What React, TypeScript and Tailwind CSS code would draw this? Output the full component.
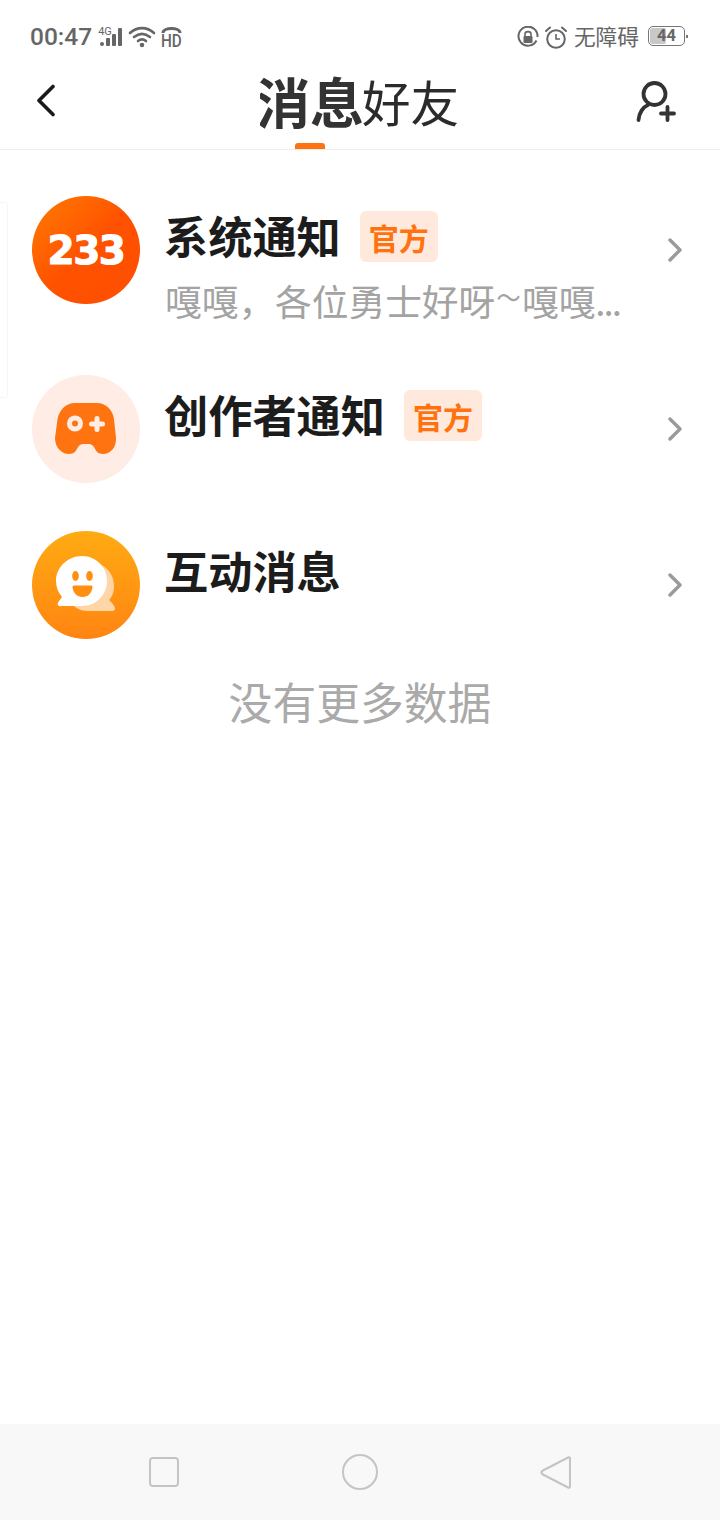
import React from "react";

const cjk = { fontFamily: '"Noto Sans CJK SC", "Noto Sans", sans-serif' };

function Chevron() {
  return (
    <svg width="14" height="24" viewBox="0 0 14 24" fill="none" className="ml-auto">
      <path d="M2 2 L12 12 L2 22" stroke="#9a9a9a" strokeWidth="3.4" strokeLinecap="round" strokeLinejoin="round" />
    </svg>
  );
}

function Badge() {
  return (
    <span className="ml-[19px] mt-[4px] flex h-[51px] w-[78px] items-center justify-center rounded-[6px] bg-[#ffe9dd] text-[30px] font-bold leading-none text-[#ff7210]">
      官方
    </span>
  );
}

function Row({ avatar, title, badge, sub, className }: { avatar: React.ReactNode; title: string; badge?: boolean; sub?: React.ReactNode; className: string }) {
  return (
    <div className={"flex items-start pl-[32px] pr-[38px] " + className}>
      <div className="h-[108px] w-[108px] shrink-0">{avatar}</div>
      <div className="ml-[25px] w-[470px] shrink-0 pt-[11px]">
        <div className="ml-[-1px] flex items-start">
          <span className="text-[44.2px] font-bold leading-[56px] text-[#1c1c1c]">{title}</span>
          {badge && <Badge />}
        </div>
        {sub && <div className="mt-[6px] h-[50px] w-[470px] whitespace-nowrap text-[36.7px] leading-[50px] text-[#a3a3a3]">{sub}</div>}
      </div>
      <div className="flex h-[108px] flex-1 items-center">
        <Chevron />
      </div>
    </div>
  );
}

function Logo233() {
  return (
    <div className="flex h-[108px] w-[108px] items-center justify-center overflow-hidden rounded-full bg-gradient-to-br from-[#ff7a00] via-[#ff5200] to-[#ff4d00]">
      <span className="text-[39px] font-bold leading-none tracking-[-1.5px] text-white [-webkit-text-stroke:1px_white]" style={{ fontFamily: '"DejaVu Sans", sans-serif' }}>
        233
      </span>
    </div>
  );
}

function GameAvatar() {
  return (
    <div className="flex h-[108px] w-[108px] items-center justify-center rounded-full bg-[#ffece5]">
      <svg width="62" height="52" viewBox="0 0 62 52" className="ml-[-1px]">
        <path
          d="M20 0 H42 C52 0 58 8 59 16 L61 35 C61.5 45 55 51 48 51 C43 51 41 48 39.5 45 C38 42 36 41 34 41 H28 C26 41 24 42 22.5 45 C21 48 19 51 14 51 C7 51 0 45 0 35 L2.5 16 C4 8 10 0 20 0 Z"
          fill="#ff7411"
        />
        <circle cx="20" cy="20.5" r="5.5" fill="none" stroke="#ffece5" strokeWidth="5" />
        <path d="M36.5 21 H47.5 M42 15.5 V26.5" stroke="#ffece5" strokeWidth="5" strokeLinecap="round" />
      </svg>
    </div>
  );
}

function ChatAvatar() {
  return (
    <div className="flex h-[108px] w-[108px] items-center justify-center rounded-full bg-gradient-to-b from-[#ffab12] to-[#ff8412]">
      <svg width="60" height="58" viewBox="0 0 60 58">
        <path d="M33 6 C47 6 58 16 58 30 C58 36 56 41 53 44 C56 47 58 49 59 52 C59.5 54 58 55 56 55 H32 C18 55 10 44 10 30 C10 16 20 6 33 6 Z" fill="#ffd6a8" />
        <path d="M26 0 C40 0 51 11 51 25 C51 39 40 50 26 50 H5 C2 51 1 48 2 46.5 L6 41 C2 36 0 31 0 25 C0 11 12 0 26 0 Z" fill="#ffffff" />
        <ellipse cx="19.5" cy="20" rx="3.3" ry="5" fill="#ff8f10" />
        <ellipse cx="33.5" cy="20" rx="3.3" ry="5" fill="#ff8f10" />
        <path d="M18 29.5 H35 C36 29.5 36.5 30 36.5 31 C36 37 32 41 26.5 41 C21 41 17 37 16.5 31 C16.5 30 17 29.5 18 29.5 Z" fill="#ff8f10" />
      </svg>
    </div>
  );
}

function StatusBar() {
  return (
    <div className="flex h-[72px] items-start justify-between pl-[30px] pr-[32px] pt-[22px] text-[#666666]">
      <div className="flex items-start">
        <span className="text-[24.5px] font-medium leading-[30px]" style={{ fontFamily: "Roboto, sans-serif" }}>00:47</span>
        <div className="relative ml-[6px] mt-[5px] h-[20px] w-[25px]">
          <span className="absolute left-0 top-0 text-[11px] leading-[10px]" style={{ fontFamily: "Roboto, sans-serif" }}>4G</span>
          <svg width="25" height="20" viewBox="0 0 25 20" className="absolute left-0 top-0">
            <rect x="2" y="15" width="4" height="4" rx="2" fill="#666" />
            <rect x="8" y="11" width="4" height="8" rx="1" fill="#666" />
            <rect x="14" y="7" width="4" height="12" rx="1" fill="#666" />
            <rect x="20" y="1" width="4" height="18" rx="1" fill="#666" />
          </svg>
        </div>
        <svg width="28" height="22" viewBox="0 0 28 22" className="ml-[5px] mt-[4px]" fill="none" stroke="#666" strokeWidth="2.6" strokeLinecap="round">
          <path d="M2 7 C9 0.5 19 0.5 26 7" />
          <path d="M6 11 C11 7 17 7 22 11" />
          <path d="M10 15 C12.5 13 15.5 13 18 15" />
          <circle cx="14" cy="19" r="1" fill="#666" />
        </svg>
        <div className="relative ml-[5px] mt-[3px] h-[24px] w-[21px]">
          <svg width="21" height="10" viewBox="0 0 21 10" className="absolute left-0 top-0" fill="none" stroke="#666" strokeWidth="3">
            <path d="M2 8 C2 2 19 2 19 8" />
          </svg>
          <span className="absolute left-0 top-[7px] origin-left scale-x-[0.85] text-[18px] font-medium leading-[18px]" style={{ fontFamily: "Roboto, sans-serif" }}>HD</span>
        </div>
      </div>
      <div className="flex items-start">
        <svg width="22" height="22" viewBox="0 0 22 22" fill="none" className="mt-[4px]">
          <path d="M19.5 14.5 A9.5 9.5 0 1 1 20.5 11" stroke="#666" strokeWidth="2" />
          <rect x="6.5" y="10" width="9" height="7" rx="1" fill="#666" />
          <path d="M8 10 V8 C8 4.8 14 4.8 14 8 V10" stroke="#666" strokeWidth="1.6" />
        </svg>
        <svg width="22" height="23" viewBox="0 0 22 23" className="ml-[6px] mt-[4px]" fill="none" stroke="#666" strokeWidth="2">
          <circle cx="11" cy="13" r="8.8" />
          <path d="M11 8 V13 H15" strokeWidth="1.6" />
          <path d="M1 5 L5 1.5 M21 5 L17 1.5" strokeLinecap="round" />
        </svg>
        <span className="ml-[7px] mt-[-1px] text-[21.7px] leading-[30px]" style={cjk}>无障碍</span>
        <div className="relative ml-[9px] mt-[4px] flex items-center">
          <div className="relative h-[20px] w-[37px] overflow-hidden rounded-[5px] border border-[#777]">
            <div className="absolute left-[1px] top-[1px] h-[16px] w-[16px] rounded-[2px] bg-[#c8c8c8]" />
            <span className="absolute inset-0 text-center text-[16.5px] font-bold leading-[18px] text-[#666]" style={{ fontFamily: "Roboto, sans-serif" }}>44</span>
          </div>
          <div className="ml-[1px] h-[3px] w-[2px] bg-[#777]" />
        </div>
      </div>
    </div>
  );
}

function Header() {
  return (
    <div className="relative flex h-[78px] items-start justify-between border-b border-[#ececec] pl-[36px] pr-[44px]">
      <svg width="20" height="33" viewBox="0 0 20 33" fill="none" className="mt-[12px]">
        <path d="M17 2.5 L3 16.5 L17 30.5" stroke="#1a1a1a" strokeWidth="3.6" strokeLinecap="round" strokeLinejoin="round" />
      </svg>
      <div className="absolute left-[260px] top-0 flex items-start">
        <span className="h-[58px] w-[102px] overflow-hidden whitespace-nowrap text-[54px] font-bold leading-[58px] text-[#333333]">
          <span className="ml-[-4px] inline-block">消息</span>
        </span>
        <span className="mt-[-2px] whitespace-nowrap text-[48.5px] leading-[62px] text-[#2b2b2b]">好友</span>
      </div>
      <div className="absolute bottom-0 left-[295px] h-[6px] w-[30px] rounded-t-[3px] bg-[#ff7210]" />
      <svg width="40" height="44" viewBox="0 0 40 44" fill="none" className="mt-[8px]" stroke="#333" strokeLinecap="round">
        <circle cx="18.5" cy="14" r="11" strokeWidth="3.8" />
        <path d="M2.5 40 C3 33 7 27 12 25" strokeWidth="3.8" />
        <path d="M25 33.5 H38 M31.5 27 V40" strokeWidth="3.8" />
      </svg>
    </div>
  );
}

function NavBar() {
  return (
    <div className="flex h-[96px] shrink-0 items-center justify-center bg-[#f8f8f8]">
      <div className="flex w-[193px] justify-start">
        <div className="h-[30px] w-[30px] rounded-[4px] border-[2px] border-[#c4c4c4]" />
      </div>
      <div className="h-[36px] w-[36px] rounded-full border-[2px] border-[#c4c4c4]" />
      <div className="flex w-[193px] justify-end">
        <svg width="31" height="35" viewBox="0 0 32 36" fill="none">
          <path d="M29 2.5 C30 2 31 2.5 31 4 V32 C31 33.5 30 34 29 33.5 L3 20 C1 19 1 17 3 16 Z" stroke="#c4c4c4" strokeWidth="2.2" />
        </svg>
      </div>
    </div>
  );
}

export default function App() {
  return (
    <div className="relative flex h-[1520px] w-[720px] flex-col overflow-hidden bg-white" style={cjk}>
      <StatusBar />
      <Header />
      <div className="absolute left-0 top-[202px] h-[196px] w-[8px] rounded-r-[4px] border border-l-0 border-[#f6f6f6]" />
      <div className="flex-1 pt-[46px]">
        <Row
          className="mb-[48px] h-[131px]"
          avatar={<Logo233 />}
          title="系统通知"
          badge
          sub={
            <>
              嘎嘎，各位勇士好呀<span className="text-[50px] font-light leading-none">~</span>嘎嘎<span className="tracking-[-2px]">...</span>
            </>
          }
        />
        <Row className="mb-[48px]" avatar={<GameAvatar />} title="创作者通知" badge />
        <Row className="" avatar={<ChatAvatar />} title="互动消息" />
        <div className="mt-[32px] text-center text-[43.8px] leading-[60px] text-[#aaaaaa]">没有更多数据</div>
      </div>
      <NavBar />
    </div>
  );
}
